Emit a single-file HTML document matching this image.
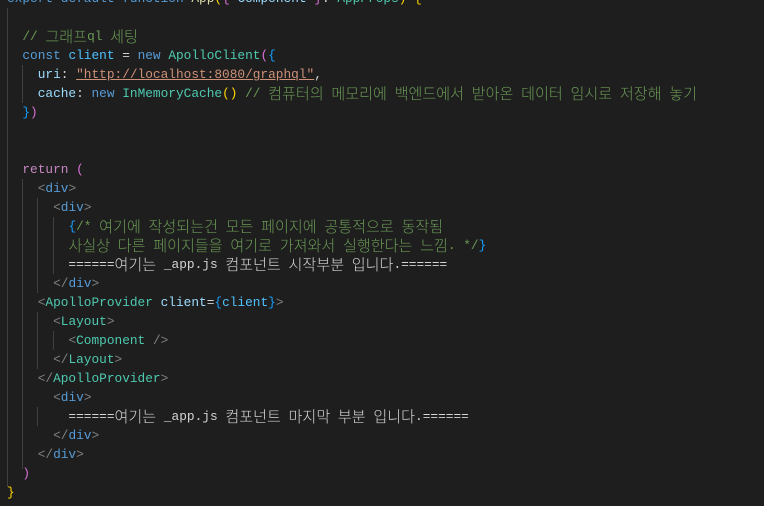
<!DOCTYPE html>
<html><head><meta charset="utf-8"><style>
html,body{margin:0;padding:0;background:#1e1e1e;width:764px;height:506px;overflow:hidden}
#c{position:absolute;left:7px;top:-11px;font-family:"Liberation Mono","Noto Sans CJK KR",monospace;font-size:12.8px;line-height:19px;color:#d4d4d4}
.l{height:19px;white-space:pre}
.k{font-size:15.1px;font-family:"Noto Sans CJK KR","Liberation Mono",sans-serif;font-weight:300;line-height:19px;display:inline-block;vertical-align:top;height:19px}
.g{position:absolute;width:1px;background:#404040}
.kw{color:#569cd6}.pu{color:#c586c0}.fn{color:#dcdcaa}.v{color:#9cdcfe}.c2{color:#4fc1ff}.t{color:#4ec9b0}.s{color:#ce9178}.cm{color:#6a9955}.p{color:#808080}
.b1{color:#ffd700}.b2{color:#da70d6}.b3{color:#179fff}
.s{text-decoration:underline;text-decoration-color:#ce9178}
</style></head><body>
<div class="g" style="left:7px;top:8px;height:479px"></div>
<div class="g" style="left:22px;top:65px;height:38px"></div>
<div class="g" style="left:22px;top:179px;height:290px"></div>
<div class="g" style="left:37px;top:198px;height:95px"></div>
<div class="g" style="left:53px;top:217px;height:57px"></div>
<div class="g" style="left:53px;top:331px;height:19px"></div>
<div class="g" style="left:37px;top:312px;height:57px"></div>
<div class="g" style="left:37px;top:407px;height:19px"></div>
<div id="c"><div class="l"><span class="kw">export</span> <span class="kw">default</span> <span class="kw">function</span> <span class="fn">App</span><span class="b1">(</span><span class="b2">{</span> <span class="v">Component</span> <span class="b2">}</span>: <span class="t">AppProps</span><span class="b1">)</span> <span class="b1">{</span></div><div class="l"> </div><div class="l">  <span class="cm">// 그래프ql 세팅</span></div><div class="l">  <span class="kw">const</span> <span class="c2">client</span> = <span class="kw">new</span> <span class="t">ApolloClient</span><span class="b2">(</span><span class="b3">{</span></div><div class="l">    <span class="v">uri</span>: <span class="s">"http://localhost:8080/graphql"</span>,</div><div class="l">    <span class="v">cache</span>: <span class="kw">new</span> <span class="t">InMemoryCache</span><span class="b1">()</span> <span class="cm">// 컴퓨터의 메모리에 백엔드에서 받아온 데이터 임시로 저장해 놓기</span></div><div class="l">  <span class="b3">}</span><span class="b2">)</span></div><div class="l"> </div><div class="l"> </div><div class="l">  <span class="pu">return</span> <span class="b2">(</span></div><div class="l">    <span class="p">&lt;</span><span class="kw">div</span><span class="p">&gt;</span></div><div class="l">      <span class="p">&lt;</span><span class="kw">div</span><span class="p">&gt;</span></div><div class="l">        <span class="b3">{</span><span class="cm">/* 여기에 작성되는건 모든 페이지에 공통적으로 동작됨</span></div><div class="l"><span class="cm">        사실상 다른 페이지들을 여기로 가져와서 실행한다는 느낌. */</span><span class="b3">}</span></div><div class="l">        ======여기는 _app.js 컴포넌트 시작부분 입니다.======</div><div class="l">      <span class="p">&lt;/</span><span class="kw">div</span><span class="p">&gt;</span></div><div class="l">    <span class="p">&lt;</span><span class="t">ApolloProvider</span> <span class="v">client</span>=<span class="b3">{</span><span class="c2">client</span><span class="b3">}</span><span class="p">&gt;</span></div><div class="l">      <span class="p">&lt;</span><span class="t">Layout</span><span class="p">&gt;</span></div><div class="l">        <span class="p">&lt;</span><span class="t">Component</span> <span class="p">/&gt;</span></div><div class="l">      <span class="p">&lt;/</span><span class="t">Layout</span><span class="p">&gt;</span></div><div class="l">    <span class="p">&lt;/</span><span class="t">ApolloProvider</span><span class="p">&gt;</span></div><div class="l">      <span class="p">&lt;</span><span class="kw">div</span><span class="p">&gt;</span></div><div class="l">        ======여기는 _app.js 컴포넌트 마지막 부분 입니다.======</div><div class="l">      <span class="p">&lt;/</span><span class="kw">div</span><span class="p">&gt;</span></div><div class="l">    <span class="p">&lt;/</span><span class="kw">div</span><span class="p">&gt;</span></div><div class="l">  <span class="b2">)</span></div><div class="l"><span class="b1">}</span></div></div>
<script>
(function(){
var w=document.createTreeWalker(document.getElementById('c'),NodeFilter.SHOW_TEXT,null),n,a=[];
while(n=w.nextNode())if(/[\uac00-\ud7a3]/.test(n.nodeValue))a.push(n);
a.forEach(function(t){
var parts=t.nodeValue.split(/([\uac00-\ud7a3]+)/),f=document.createDocumentFragment();
parts.forEach(function(p){if(!p)return;if(/[\uac00-\ud7a3]/.test(p)){var s=document.createElement('span');s.className='k';s.textContent=p;f.appendChild(s);}else f.appendChild(document.createTextNode(p));});
t.parentNode.replaceChild(f,t);
});
})();
</script>
</body></html>
